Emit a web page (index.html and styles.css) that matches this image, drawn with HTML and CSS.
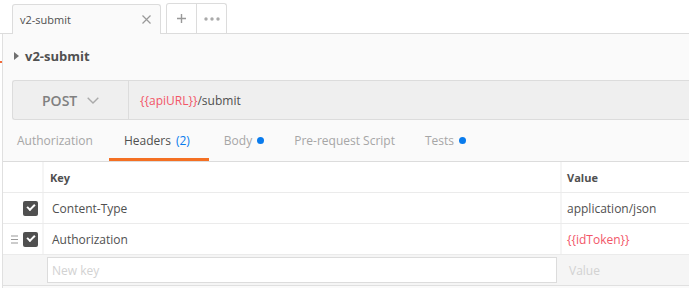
FILE: index.html
```html
<!DOCTYPE html>
<html lang="en">
<head>
    <meta charset="UTF-8">
    <title>v2-submit</title>
    <link rel="stylesheet" href="styles.css">
</head>
<body>
    <div class="tabbar">
        <div class="tab">
            <span class="tab-title">v2-submit</span>
            <svg class="tab-close" width="9" height="9" viewBox="0 0 9 9"><path d="M0.5 0.5 L8.5 8.5 M8.5 0.5 L0.5 8.5" stroke="#999" stroke-width="1.2"/></svg>
        </div>
        <div class="tab-actions">
            <div class="tab-btn">
                <svg width="9" height="9" viewBox="0 0 9 9"><path d="M4.5 0 V9 M0 4.5 H9" stroke="#999" stroke-width="1.4"/></svg>
            </div>
            <div class="tab-btn">
                <svg width="16" height="4" viewBox="0 0 16 4"><circle cx="2" cy="2" r="1.7" fill="#aaa"/><circle cx="8" cy="2" r="1.7" fill="#aaa"/><circle cx="14" cy="2" r="1.7" fill="#aaa"/></svg>
            </div>
        </div>
    </div>

    <div class="workspace">
        <div class="edge"><span class="edge-mark"></span></div>
        <div class="main">
            <div class="request-name">
                <svg class="caret" width="5" height="8" viewBox="0 0 5 8"><path d="M0 0 L5 4 L0 8 Z" fill="#707070"/></svg>
                <span>v2-submit</span>
            </div>

            <div class="url-bar">
                <div class="method">
                    <span>POST</span>
                    <svg width="12" height="7" viewBox="0 0 12 7"><path d="M0.7 0.7 L6 6 L11.3 0.7" fill="none" stroke="#aaa" stroke-width="1.4"/></svg>
                </div>
                <div class="url"><span class="var">{{apiURL}}</span>/submit</div>
            </div>

            <div class="req-tabs">
                <div class="req-tab first">Authorization</div>
                <div class="req-tab active">Headers <span class="count">(2)</span></div>
                <div class="req-tab">Body <span class="dot"></span></div>
                <div class="req-tab">Pre-request Script</div>
                <div class="req-tab">Tests <span class="dot"></span></div>
            </div>

            <div class="kv-table">
                <div class="kv-row head">
                    <div class="cell check"></div>
                    <div class="cell key">Key</div>
                    <div class="cell value">Value</div>
                </div>
                <div class="kv-row">
                    <div class="cell check"><span class="box"></span></div>
                    <div class="cell key">Content-Type</div>
                    <div class="cell value">application/json</div>
                </div>
                <div class="kv-row">
                    <div class="cell check">
                        <svg class="drag" width="7" height="9" viewBox="0 0 7 9"><path d="M0 1 H7 M0 4.5 H7 M0 8 H7" stroke="#999" stroke-width="1.2"/></svg>
                        <span class="box"></span>
                    </div>
                    <div class="cell key">Authorization</div>
                    <div class="cell value"><span class="var">{{idToken}}</span></div>
                </div>
                <div class="kv-row new">
                    <div class="cell check"></div>
                    <div class="cell key"><div class="new-input">New key</div></div>
                    <div class="cell value placeholder">Value</div>
                </div>
            </div>
        </div>
    </div>
</body>
</html>
```

FILE: styles.css
```css
body {
    margin: 0;
    font-family: 'Open Sans', sans-serif;
    color: #505050;
    background: #fafafa;
    overflow: hidden;
}
.tabbar {
    height: 33px;
    background: #ffffff;
    border-bottom: 1px solid #dcdcdc;
    display: flex;
    align-items: flex-end;
    padding-left: 12px;
}
.tab {
    width: 149px;
    box-sizing: border-box;
    margin-bottom: -1px;
    height: 30px;
    background: #fafafa;
    border: 1px solid #dcdcdc;
    border-bottom: none;
    border-radius: 3px 3px 0 0;
    display: flex;
    align-items: center;
    justify-content: space-between;
    padding: 0 9px 0 7px;
    font-size: 11px;
}
.tab-title {
    color: #505050;
}
.tab-actions {
    display: flex;
    margin-left: 5px;
    height: 29px;
    border: 1px solid #dcdcdc;
    border-bottom: none;
    border-radius: 3px 3px 0 0;
}
.tab-btn {
    width: 29px;
    display: flex;
    align-items: center;
    justify-content: center;
}
.tab-btn + .tab-btn {
    border-left: 1px solid #dcdcdc;
}
.workspace {
    display: flex;
}
.edge {
    width: 2px;
    background: #ffffff;
    border-right: 1px solid #e0e0e0;
    position: relative;
    height: 254px;
}
.edge-mark {
    position: absolute;
    left: 0;
    top: 27px;
    width: 2px;
    height: 2px;
    background: #f26b3a;
}
.main {
    flex: 1;
}
.request-name {
    height: 46px;
    display: flex;
    align-items: center;
    padding-left: 11px;
    gap: 6px;
    font-size: 13px;
    font-weight: 700;
    color: #505050;
    box-sizing: border-box;
    padding-bottom: 3px;
}
.url-bar {
    margin-left: 9px;
    height: 40px;
    box-sizing: border-box;
    background: #efefef;
    border: 1px solid #dcdcdc;
    border-right: none;
    border-radius: 3px 0 0 3px;
    display: flex;
}
.method {
    width: 116px;
    border-right: 1px solid #dcdcdc;
    display: flex;
    align-items: center;
    gap: 10px;
    padding-left: 29px;
    box-sizing: border-box;
    font-size: 14px;
    font-weight: 600;
    color: #808080;
}
.url {
    display: flex;
    align-items: center;
    padding-left: 11px;
    font-size: 12px;
    color: #505050;
}
.var {
    color: #f25668;
}
.req-tabs {
    height: 42px;
    box-sizing: border-box;
    border-bottom: 1px solid #dcdcdc;
    display: flex;
}
.req-tab {
    padding: 0 15px;
    display: flex;
    align-items: center;
    gap: 5px;
    font-size: 12px;
    color: #a6a6a6;
    position: relative;
}
.req-tab.first {
    padding-left: 14px;
    padding-right: 16px;
}
.req-tab.active {
    color: #505050;
    padding: 0 19px 0 15px;
}
.req-tab.active::after {
    content: '';
    position: absolute;
    left: 0;
    right: 0;
    bottom: 0;
    height: 3px;
    background: #f47023;
}
.count {
    color: #097bed;
}
.dot {
    width: 7px;
    height: 7px;
    border-radius: 50%;
    background: #097bed;
    display: inline-block;
}
.kv-row {
    display: flex;
    height: 31px;
    box-sizing: border-box;
    background: #ffffff;
    border-bottom: 1px solid #ebebeb;
    font-size: 12px;
}
.kv-row:last-child {
    border-bottom: 1px solid #e0e0e0;
}
.kv-row.head {
    height: 31px;
    font-size: 11px;
    font-weight: 700;
}
.cell {
    display: flex;
    align-items: center;
    box-sizing: border-box;
}
.check {
    width: 41px;
    justify-content: flex-end;
    padding-right: 4px;
    gap: 5px;
    border-right: 2px solid #f5f5f5;
}
.key {
    width: 518px;
    padding-left: 8px;
    border-right: 2px solid #f5f5f5;
}
.value {
    flex: 1;
    padding-left: 5px;
}
.head .key {
    padding-left: 6px;
}
.box {
    width: 15px;
    height: 15px;
    border-radius: 2px;
    background: #505050;
    position: relative;
}
.box::after {
    content: '';
    position: absolute;
    left: 4px;
    top: 3px;
    width: 6px;
    height: 3px;
    border-left: 2px solid #ffffff;
    border-bottom: 2px solid #ffffff;
    transform: rotate(-45deg);
}
.kv-row.new {
    background: #f5f5f5;
}
.new .check,
.new .key {
    border-right-color: #f5f5f5;
}
.new .key {
    padding-left: 3px;
}
.new-input {
    width: 510px;
    height: 26px;
    box-sizing: border-box;
    background: #ffffff;
    border: 1px solid #dcdcdc;
    display: flex;
    align-items: center;
    padding-left: 4px;
    color: #d2d2d2;
}
.placeholder {
    color: #d2d2d2;
    padding-left: 7px;
}
```
